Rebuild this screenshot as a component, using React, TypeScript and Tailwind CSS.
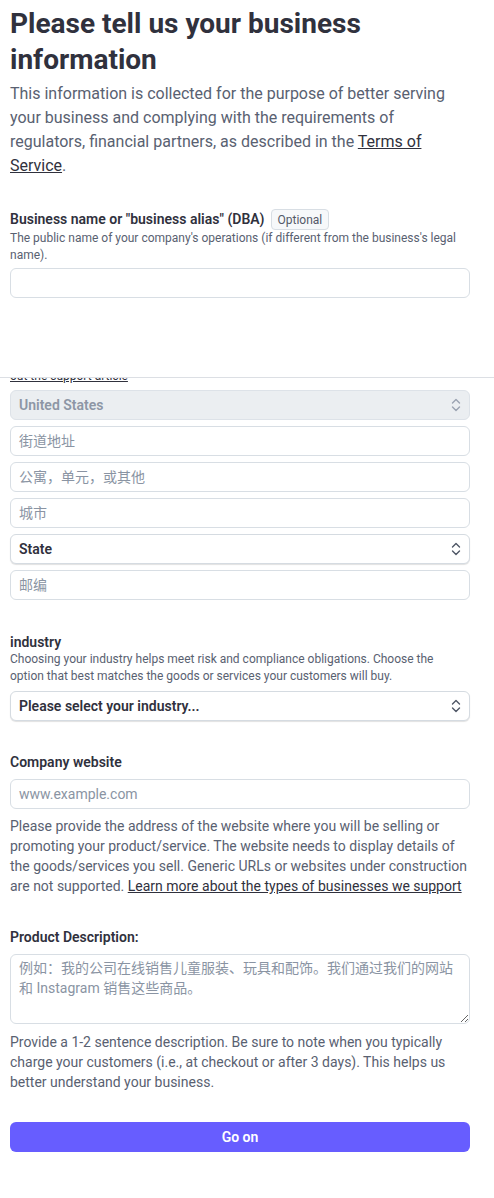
import React from "react";

const font = { fontFamily: 'Roboto, "Noto Sans CJK SC", sans-serif' };

function Chevrons({ color = "#6c7688" }: { color?: string }) {
  return (
    <svg width="10" height="14" viewBox="0 0 10 14" fill="none" className="shrink-0">
      <path d="M1.5 5L5 1.5L8.5 5" stroke={color} strokeWidth="1.4" strokeLinecap="round" strokeLinejoin="round" />
      <path d="M1.5 9L5 12.5L8.5 9" stroke={color} strokeWidth="1.4" strokeLinecap="round" strokeLinejoin="round" />
    </svg>
  );
}

function TextInput({ placeholder }: { placeholder?: string }) {
  return (
    <div className="h-[30px] w-full rounded-[6px] border border-[#d8dee4] bg-white px-[8px] flex items-center text-[14px] text-[#8a94a3]">
      {placeholder}
    </div>
  );
}

function Select({ value, disabled }: { value: string; disabled?: boolean }) {
  return (
    <div
      className={
        disabled
          ? "h-[30px] w-full rounded-[6px] border border-[#dde2e8] bg-[#ebeef1] px-[8px] flex items-center justify-between"
          : "h-[30px] w-full rounded-[6px] border border-[#d5dbe1] bg-white px-[8px] flex items-center justify-between shadow-[0_1px_1px_rgba(0,0,0,0.12)]"
      }
    >
      <span className={disabled ? "text-[14px] font-semibold text-[#8d96a5]" : "text-[14px] font-semibold text-[#30313d]"}>{value}</span>
      <Chevrons color={disabled ? "#9aa3b1" : "#4f5766"} />
    </div>
  );
}

export default function App() {
  return (
    <div className="min-h-[1198px] w-[494px] bg-white" style={font}>
      <div className="w-[460px] ml-[10px] pt-[6px]">
        <h1 className="text-[28px] leading-[36px] font-bold text-[#30313d]">
          Please tell us your business information
        </h1>
        <p className="mt-[4px] text-[16px] leading-[24px] text-[#596171]">
          This information is collected for the purpose of better serving your business and complying with the requirements of regulators, financial partners, as described in the{" "}
          <span className="underline text-[#30313d]">Terms of Service</span>.
        </p>

        <div className="mt-[31px]">
          <div className="flex h-[21px] items-center gap-[6px]">
            <span className="text-[14px] font-semibold text-[#30313d]">Business name or "business alias" (DBA)</span>
            <span className="rounded-[4px] border border-[#d8dee4] bg-[#f6f8fa] px-[6px] h-[21px] flex items-center text-[12px] text-[#545969]">Optional</span>
          </div>
          <p className="text-[12px] leading-[17px] text-[#596171]">
            The public name of your company's operations (if different from the business's legal name).
          </p>
          <div className="mt-[4px]">
            <TextInput />
          </div>
        </div>
      </div>

      <div className="mt-[79px] border-t border-[#dcdfe4] overflow-hidden">
        <div className="w-[460px] ml-[10px]">
          <p className="-mt-[10px] text-[12px] leading-[17px] text-[#30313d] underline">out the support article</p>
          <div className="mt-[5px] flex flex-col gap-[6px]">
            <Select value="United States" disabled />
            <TextInput placeholder="街道地址" />
            <TextInput placeholder="公寓，单元，或其他" />
            <TextInput placeholder="城市" />
            <Select value="State" />
            <TextInput placeholder="邮编" />
          </div>

          <div className="mt-[33px]">
            <div className="text-[14px] font-semibold text-[#30313d] leading-[18px]">industry</div>
            <p className="text-[12px] leading-[17px] text-[#596171]">
              Choosing your industry helps meet risk and compliance obligations. Choose the option that best matches the goods or services your customers will buy.
            </p>
            <div className="mt-[6px]">
              <Select value="Please select your industry..." />
            </div>
          </div>

          <div className="mt-[32px]">
            <div className="text-[14px] font-semibold text-[#30313d] leading-[18px]">Company website</div>
            <div className="mt-[8px]">
              <TextInput placeholder="www.example.com" />
            </div>
            <p className="mt-[7px] text-[14px] leading-[20px] text-[#596171]">
              Please provide the address of the website where you will be selling or promoting your product/service. The website needs to display details of the goods/services you sell. Generic URLs or websites under construction are not supported.{" "}
              <span className="underline text-[#30313d]">Learn more about the types of businesses we support</span>
            </p>
          </div>

          <div className="mt-[32px]">
            <div className="text-[14px] font-semibold text-[#30313d] leading-[18px]">Product Description:</div>
            <textarea
              className="mt-[8px] block h-[70px] w-full resize-y rounded-[6px] border border-[#d8dee4] bg-white px-[8px] py-[3px] text-[14px] leading-[20px] text-[#30313d] placeholder:text-[#8a94a3] outline-none"
              style={font}
              placeholder="例如：我的公司在线销售儿童服装、玩具和配饰。我们通过我们的网站和 Instagram 销售这些商品。"
            />
            <p className="mt-[8px] text-[14px] leading-[20px] text-[#596171]">
              Provide a 1-2 sentence description. Be sure to note when you typically charge your customers (i.e., at checkout or after 3 days). This helps us better understand your business.
            </p>
          </div>

          <button className="mt-[30px] h-[30px] w-full rounded-[6px] bg-[#675dff] text-white text-[14px] font-semibold" style={font}>
            Go on
          </button>
        </div>
      </div>
    </div>
  );
}
